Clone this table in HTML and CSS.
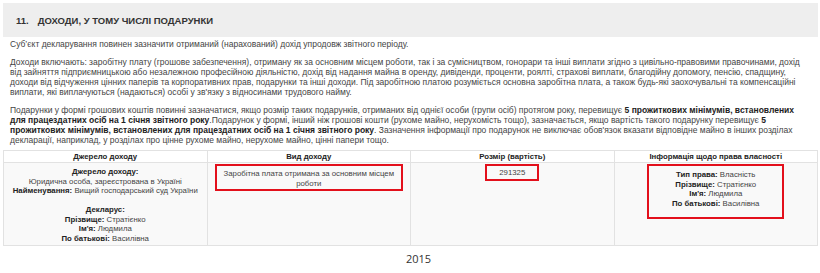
FILE: index.html
```html
<!DOCTYPE html>
<html lang="uk">
<head>
<meta charset="utf-8">
<title>Доходи</title>
<link rel="stylesheet" href="styles.css">
</head>
<body>
<div class="page">
  <div class="section-title"><span class="num">11.</span>ДОХОДИ, У ТОМУ ЧИСЛІ ПОДАРУНКИ</div>
  <div class="intro">
    <p>Суб’єкт декларування повинен зазначити отриманий (нарахований) дохід упродовж звітного періоду.</p>
    <p>Доходи включають: заробітну плату (грошове забезпечення), отриману як за основним місцем роботи, так і за сумісництвом, гонорари та інші виплати згідно з цивільно-правовими правочинами, дохід від зайняття підприємницькою або незалежною професійною діяльністю, дохід від надання майна в оренду, дивіденди, проценти, роялті, страхові виплати, благодійну допомогу, пенсію, спадщину, доходи від відчуження цінних паперів та корпоративних прав, подарунки та інші доходи. Під заробітною платою розуміється основна заробітна плата, а також будь-які заохочувальні та компенсаційні виплати, які виплачуються (надаються) особі у зв'язку з відносинами трудового найму.</p>
    <p>Подарунки у формі грошових коштів повинні зазначатися, якщо розмір таких подарунків, отриманих від однієї особи (групи осіб) протягом року, перевищує <b>5 прожиткових мінімумів, встановлених</b> <b>для працездатних осіб на 1 січня звітного року</b>.Подарунок у формі, інший ніж грошові кошти (рухоме майно, нерухомість тощо), зазначається, якщо вартість такого подарунку перевищує <b>5</b> <b>прожиткових мінімумів, встановлених для працездатних осіб на 1 січня звітного року</b>. Зазначення інформації про подарунок не виключає обов'язок вказати відповідне майно в інших розділах декларації, наприклад, у розділах про цінне рухоме майно, нерухоме майно, цінні папери тощо.</p>
  </div>
  <table class="income">
    <thead>
      <tr>
        <th>Джерело доходу</th>
        <th>Вид доходу</th>
        <th>Розмір (вартість)</th>
        <th>Інформація щодо права власності</th>
      </tr>
    </thead>
    <tbody>
      <tr>
        <td class="source">
          <b>Джерело доходу:</b><br>
          Юридична особа, зареєстрована в Україні<br>
          <b>Найменування:</b> Вищий господарський суд України<br>
          <br>
          <b>Декларус:</b><br>
          <b>Прізвище:</b> Стратієнко<br>
          <b>Ім'я:</b> Людмила<br>
          <b>По батькові:</b> Василівна
        </td>
        <td class="kind">
          <div class="mark mark-kind">Заробітна плата отримана за основним місцем роботи</div>
        </td>
        <td class="amount">
          <div class="mark mark-amount">291325</div>
        </td>
        <td class="owner">
          <div class="mark mark-owner">
            <b>Тип права:</b> Власність<br>
            <b>Прізвище:</b> Стратієнко<br>
            <b>Ім'я:</b> Людмила<br>
            <b>По батькові:</b> Василівна
          </div>
        </td>
      </tr>
    </tbody>
  </table>
  <div class="year">2015</div>
</div>
</body>
</html>
```

FILE: styles.css
```css
html, body {
  margin: 0;
  padding: 0;
  background: #ffffff;
}

.page {
  padding: 3px 2px 0 3px;
  font-family: "Liberation Sans", Arial, sans-serif;
  color: #444444;
}

.section-title {
  height: 34px;
  background: #eeeeee;
  display: flex;
  align-items: center;
  padding-left: 13px;
  font-size: 9.5px;
  font-weight: bold;
  color: #333333;
}

.section-title .num {
  margin-right: 9px;
}

.intro {
  padding: 2px 8px 0 7px;
  font-size: 8.5px;
  line-height: 10px;
}

.intro p {
  margin: 0 0 8px;
}

.intro p:last-child {
  margin-bottom: 5px;
}

.intro b {
  color: #222222;
}

.income {
  width: 100%;
  table-layout: fixed;
  border-collapse: collapse;
  font-size: 7.8px;
  line-height: 9.5px;
  border: 1px solid #e2e2e2;
}

.income th {
  background: #ffffff;
  color: #222222;
  font-weight: bold;
  text-align: center;
  height: 11px;
  padding: 0 3px;
  border: 1px solid #e2e2e2;
}

.income td {
  background: #f9f9f9;
  border: 1px solid #e2e2e2;
  vertical-align: top;
  text-align: center;
  padding: 1px 7px 2px;
  color: #444444;
}

.income td b {
  color: #222222;
}

.income td.source {
  padding: 4px 3px 2px;
}

.mark {
  border: 2px solid #e3101c;
  box-sizing: border-box;
}

.mark-kind {
  padding: 3px 5px;
  height: 27px;
}

.mark-amount {
  width: 54px;
  height: 17px;
  margin: 0 auto;
  padding-top: 2px;
}

.mark-owner {
  width: 137px;
  height: 55px;
  margin: 0 auto;
  padding-top: 4px;
}

.year {
  font-family: "Open Sans", "Liberation Sans", sans-serif;
  font-size: 11px;
  line-height: 15px;
  color: #333333;
  text-align: center;
  padding: 5px 0 0 16px;
}
```
